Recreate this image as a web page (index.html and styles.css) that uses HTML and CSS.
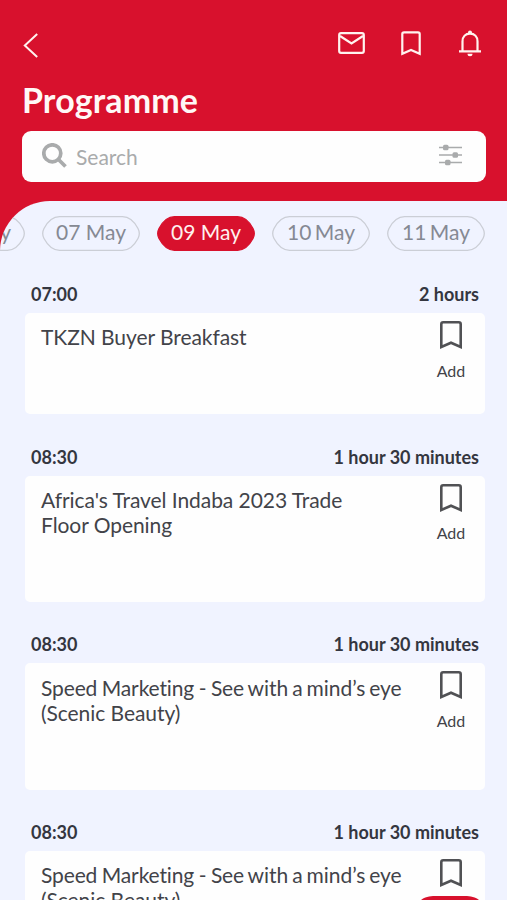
FILE: index.html
```html
<!DOCTYPE html>
<html lang="en">
<head>
<meta charset="utf-8">
<meta name="viewport" content="width=device-width, initial-scale=1">
<title>Programme</title>
<link rel="stylesheet" href="styles.css">
</head>
<body>
<svg class="defs" aria-hidden="true">
  <symbol id="pill" viewBox="0 0 98 35"><path d="M17.500 .7H80.500C87 .7 92.500 6 96 12.500Q98.600 17.500 96 22.500C92.500 29 87 34.300 80.500 34.300H17.500C11 34.300 5.500 29 2 22.500Q-.6 17.500 2 12.500C5.500 6 11 .7 17.500 .7Z"/></symbol>
  <symbol id="bookmark" viewBox="0 0 22 28"><path d="M1.300 26V3.200Q1.300 1.300 3.200 1.300H18.800Q20.700 1.300 20.700 3.200V26L11 21.700Z"/></symbol>
</svg>
<div class="app">
  <header class="header">
    <div class="bar">
      <svg class="back" viewBox="0 0 15 25"><path d="M14.200 1 1.800 12.500 14.200 24"/></svg>
      <div class="actions">
        <svg class="mail" viewBox="0 0 27 22"><rect x="1.200" y="1.200" width="24.600" height="19.600" rx="1.800"/><path d="M2 4 13.500 11.500 25 4"/></svg>
        <svg class="saved" viewBox="0 0 20 25"><path d="M1.300 22.800V3Q1.300 1.300 3 1.300H17Q18.700 1.300 18.700 3V22.800L10 19Z"/></svg>
        <svg class="bell" viewBox="0 0 24 27"><path d="M4.500 21V11.500C4.500 6.500 7.500 3.700 12 3.700S19.500 6.500 19.500 11.500V21M1 21.300H23"/><path class="solid" d="M10 4V2.500a2 2 0 0 1 4 0V4ZM9.500 23.800h5a2.500 2.500 0 0 1-5 0Z"/></svg>
      </div>
    </div>
    <h1 class="title">Programme</h1>
    <div class="search">
      <svg class="lens" viewBox="0 0 25 25"><circle cx="10.300" cy="10.300" r="8.500"/><path d="m16.500 16.500 7 7"/></svg>
      <span class="placeholder">Search</span>
      <svg class="filter" viewBox="0 0 23 22"><path d="M0 3.500H23M0 11H23M0 18.500H23"/><rect x="4" y=".8" width="5.500" height="5.400" rx="1.500"/><rect x="13.500" y="8.300" width="5.500" height="5.400" rx="1.500"/><rect x="6" y="15.800" width="5.500" height="5.400" rx="1.500"/></svg>
    </div>
  </header>
  <main class="sheet">
    <nav class="days">
      <span class="day"><svg><use href="#pill"/></svg><b>06 May</b></span>
      <span class="day"><svg><use href="#pill"/></svg><b>07 May</b></span>
      <span class="day active"><svg><use href="#pill"/></svg><b>09 May</b></span>
      <span class="day narrow"><svg><use href="#pill"/></svg><b>10 May</b></span>
      <span class="day narrow"><svg><use href="#pill"/></svg><b>11 May</b></span>
    </nav>
    <section class="session short">
      <div class="when"><span>07:00</span><span>2 hours</span></div>
      <article class="card"><h2>TKZN Buyer Breakfast</h2><div class="add"><svg><use href="#bookmark"/></svg><span>Add</span></div></article>
    </section>
    <section class="session">
      <div class="when"><span>08:30</span><span>1 hour 30 minutes</span></div>
      <article class="card"><h2>Africa's Travel Indaba 2023 Trade<br>Floor Opening</h2><div class="add"><svg><use href="#bookmark"/></svg><span>Add</span></div></article>
    </section>
    <section class="session">
      <div class="when"><span>08:30</span><span>1 hour 30 minutes</span></div>
      <article class="card"><h2><span class="lead">Speed Marketing - See</span><span class="tight"> with a mind’s eye</span><br>(Scenic Beauty)</h2><div class="add"><svg><use href="#bookmark"/></svg><span>Add</span></div></article>
    </section>
    <section class="session">
      <div class="when"><span>08:30</span><span>1 hour 30 minutes</span></div>
      <article class="card"><h2><span class="lead">Speed Marketing - See</span><span class="tight"> with a mind’s eye</span><br>(Scenic Beauty)</h2><div class="add"><svg><use href="#bookmark"/></svg><span>Add</span></div></article>
    </section>
  </main>
  <div class="fab"></div>
</div>
</body>
</html>
```
FILE: styles.css
```css
* { box-sizing: border-box; }
body { margin: 0; font-family: Lato, sans-serif; font-variant-ligatures: none; color: #424349; background: #d8112d; }
svg { display: block; fill: none; stroke: currentColor; flex: none; }
.defs { position: absolute; width: 0; height: 0; }
.app { position: relative; height: 900px; overflow: hidden; }
.header { height: 201px; padding: 30px 21px 0 22px; color: #fff3ef; }
.bar { display: flex; justify-content: space-between; height: 52px; }
.back { width: 15px; height: 25px; margin: 3px 0 0 .5px; stroke-width: 2; }
.actions { display: flex; padding-right: 5px; }
.mail { width: 27px; height: 22px; margin: 2px 36px 0 0; stroke-width: 2.2; }
.saved { width: 20px; height: 25px; margin: 1px 38px 0 0; stroke-width: 2.2; }
.bell { width: 24px; height: 27px; stroke-width: 2.2; margin: 0 -1px 0 -1px; }
.solid { fill: currentColor; stroke: none; }
.title { margin: 0; font-size: 34px; letter-spacing: .1px; line-height: 36px; height: 49px; font-weight: 700; color: #fff8f6; white-space: nowrap; }
.search { display: flex; align-items: center; height: 51px; border-radius: 9px; background: #fefefe; padding: 0 24px 0 20px; color: #a9abac; }
.lens { width: 25px; height: 25px; stroke-width: 3.7; margin-top: -2px; }
.placeholder { margin-left: 9px; flex: 1; font-size: 21px; }
.filter { width: 23px; height: 22px; stroke-width: 1.5; margin-top: -3px; }
.filter rect { fill: currentColor; stroke: none; }
.sheet { height: 699px; background: #f0f3ff; border-top-left-radius: 50px; overflow: hidden; }
.days { display: flex; gap: 17px; margin-left: -73px; padding-top: 15px; height: 79px; }
.day { position: relative; flex: none; width: 98px; height: 35px; line-height: 32px; text-align: center; color: #858993; font-size: 21px; }
.day svg { position: absolute; inset: 0; width: 98px; height: 35px; stroke: #cbced6; stroke-width: 1.3; }
.day b { position: relative; font-weight: 400; }
.narrow { word-spacing: -2px; }
.day.active { color: #fff0ee; }
.day.active svg { fill: #d8112d; stroke: #d8112d; }
.session { height: 187.500px; padding: 0 22px 0 25px; }
.short { height: 162.500px; }
.when { display: flex; justify-content: space-between; height: 33px; padding: 3px 6px 0; line-height: 22px; font-size: 18px; font-weight: 700; color: #343640; }
.card { display: flex; justify-content: space-between; height: 126.500px; padding: 12px 18px 0 16px; background: #fefefe; border-radius: 5px; }
.short .card { height: 101px; }
.card h2 { margin: -.5px 0 0; font-size: 21px; letter-spacing: -.06px; line-height: 25px; font-weight: 400; white-space: nowrap; }
.short .card h2 { margin-top: -1px; }
.lead { letter-spacing: -.13px; word-spacing: -.7px; }
.tight { word-spacing: -1.500px; letter-spacing: 0; }
.add { display: flex; flex-direction: column; align-items: center; width: 32px; margin-top: -4px; font-size: 16px; line-height: 20px; }
.add svg { width: 22px; height: 28px; stroke-width: 2.600; margin-bottom: 11.500px; color: #505154; }
.fab { position: absolute; left: 413px; top: 896px; width: 74px; height: 50px; border-radius: 20px; background: #d8112d; }
```
